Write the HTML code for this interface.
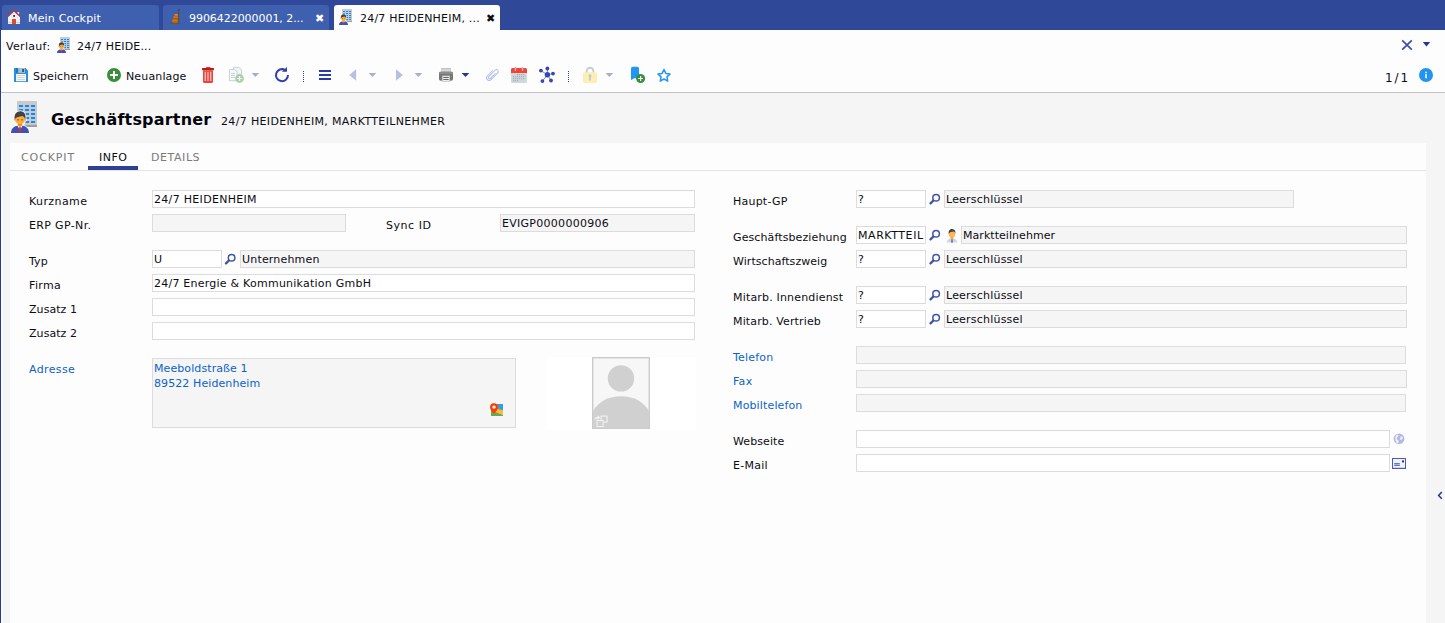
<!DOCTYPE html>
<html lang="de">
<head>
<meta charset="utf-8">
<title>Geschäftspartner</title>
<style>
*{box-sizing:border-box;margin:0;padding:0}
html,body{width:1445px;height:623px;overflow:hidden}
body{position:relative;background:#f5f5f5;font-family:"DejaVu Sans","Liberation Sans",sans-serif;font-size:11px;color:#0c0c14;line-height:18px}
.abs{position:absolute}
svg{position:absolute;overflow:visible}
#lb{left:0;top:30px;width:2px;height:593px;background:#fff;border-left:1px solid #223a94}
#top{left:0;top:0;width:1445px;height:30px;background:#2f4898}
.tab{position:absolute;top:5px;height:25px;border-radius:3px 3px 0 0;background:#3f5faf;color:#fff;line-height:25px;white-space:nowrap}
.tab span{position:absolute;top:1px}
.tab.act{background:#fdfdfd;color:#0c0c14}
#hist{left:1px;top:30px;width:1444px;height:30px;background:#fdfdfd;border-left:1px solid #fff}
#tb{left:1px;top:60px;width:1444px;height:32px;background:#fdfdfd;border-left:1px solid #fff;border-bottom:1px solid #fff}
.t{position:absolute;white-space:nowrap;line-height:18px;height:18px;margin-top:1px}
#panel{left:10px;top:143px;width:1416px;height:480px;background:#fdfdfd}
#strip{left:10px;top:170px;width:1416px;height:1px;background:#e4e4e4}
.ptab{color:#7a7a7a}
.in{position:absolute;height:18px;border:1px solid #dcdcdc;background:#fff;line-height:16px;padding:1px 0 0 1px;white-space:nowrap;overflow:hidden}
.ro{background:#f5f5f5}
.lnk{color:#0b63c9}
</style>
</head>
<body>
<div id="top" class="abs"></div>
<div class="tab" style="left:2px;width:157px"><span style="left:26px;letter-spacing:.17px">Mein Cockpit</span></div>
<div class="tab" style="left:163px;width:166px"><span style="left:26px;letter-spacing:-.05px">9906422000001, 2...</span><span style="left:152px">✖</span></div>
<div class="tab act" style="left:334px;width:166px"><span style="left:26px;letter-spacing:.21px">24/7 HEIDENHEIM, ...</span><span style="left:152px">✖</span></div>
<div id="hist" class="abs"></div><div id="tb" class="abs"></div><div id="lb" class="abs"></div><div class="abs" style="left:1px;top:92px;width:1444px;height:1px;background:#c2c2c2"></div>
<svg style="left:7px;top:9px" width="14" height="16" viewBox="0 0 14 16">
<rect x="10.3" y="3" width="1.8" height="3" fill="#e8eaf6"/>
<path d="M1 7.6 7 1.9 13 7.6V15H1Z" fill="#eceff8"/>
<rect x="1" y="13.2" width="12" height=".9" fill="#c5cae9"/>
<path d="M.5 7.8 7 1.7 13.5 7.8" fill="none" stroke="#c0392b" stroke-width="1.35" stroke-linejoin="miter"/>
<rect x="5" y="10" width="4" height="5" fill="#e64a19"/>
<rect x="6.1" y="6" width="1.9" height="1.9" fill="#01579b"/>
</svg>
<svg style="left:168px;top:8px" width="14" height="17" viewBox="0 0 14 17">
<path d="M10.6 1.6V15.2" stroke="#4e4a44" stroke-width="1"/>
<path d="M1.6 15.3H12.6" stroke="#5a564e" stroke-width="1"/>
<rect x="10.2" y="1.1" width="1.8" height="1.5" fill="#6d3b3b"/>
<rect x="4" y="10.9" width="6.3" height="4.6" rx="1.8" fill="#9a4f10"/>
<rect x="4.3" y="10.9" width="5.8" height="3.5" rx="1.6" fill="#d67a1c"/>
<rect x="5.1" y="8" width="5.2" height="3.4" rx="1.4" fill="#94490e"/>
<rect x="5.3" y="8" width="4.8" height="2.5" rx="1.2" fill="#da801f"/>
<rect x="6.2" y="5.9" width="4.1" height="2.6" rx="1.1" fill="#9a4f10"/>
<rect x="6.4" y="5.9" width="3.7" height="1.8" rx=".9" fill="#e08824"/>
<path d="M5.2 13.2c1.4.7 2.8.4 4.4-.6M6 10c1 .5 2.300.3 3.600-.400" stroke="#8a4a12" stroke-width=".5" fill="none"/>
</svg>
<svg style="left:338px;top:9px" width="14" height="16" viewBox="-1 0 28 32">
<rect x="7" y="0" width="20" height="26" rx="1" fill="#c9c9c9"/><rect x="7" y="24" width="20" height="2" fill="#9e9e9e"/>
<g fill="#0f8af9"><rect x="9" y="4" width="4" height="2"/><rect x="15" y="4" width="4" height="2"/><rect x="21" y="4" width="4" height="2"/><rect x="9" y="8" width="4" height="2"/><rect x="15" y="8" width="4" height="2"/><rect x="21" y="8" width="4" height="2"/><rect x="15" y="12" width="4" height="2"/><rect x="21" y="12" width="4" height="2"/><rect x="15" y="16" width="4" height="2"/><rect x="21" y="16" width="4" height="2"/><rect x="15" y="20" width="4" height="2"/><rect x="21" y="20" width="4" height="2"/></g>
<path d="M4.3 18C3.8 12.5 7 9.6 10.6 9.8 14.6 10 16.4 13.5 15.8 18 16.6 18 16.6 20 15.4 20.2 15 22 13.6 23.6 12.3 24.2 16.5 24.8 19 27.5 19 32H1C1 27.5 3.5 24.8 7.7 24.2 6.4 23.6 5 22 4.6 20.2 3.4 20 3.4 18 4.3 18Z" fill="#fff" stroke="#fff" stroke-width="1.3" stroke-linejoin="round" opacity=".8"/>
<path d="M1 32C1 27 4.5 24.6 10 24.5 15.5 24.6 19 27 19 32Z" fill="#3f51b5"/>
<path d="M7.4 24.6 10 29.2 12.6 24.6Z" fill="#fff"/>
<path d="M9.3 25.6h1.4l.6 4.6L10 31.6 8.7 30.2Z" fill="#d32f2f"/>
<rect x="7.8" y="20.6" width="4.4" height="4.4" rx="1.5" fill="#fb8c00"/>
<ellipse cx="10" cy="18.3" rx="5" ry="5" fill="#ffab40"/>
<circle cx="4.9" cy="18.8" r="1" fill="#ffab40"/><circle cx="15.1" cy="18.8" r="1" fill="#ffab40"/>
<path d="M4.7 18.6C3.8 13 6.8 10.2 10.6 10.3 14.6 10.5 16.2 13.8 15.3 18.6 14.8 16.6 13.8 15.4 12.2 14.9 9.6 16 6.6 15.2 4.7 18.6Z" fill="#424242"/>
<rect x="7.4" y="18" width="1.3" height="1.5" fill="#8d5a2b"/><rect x="11.4" y="18" width="1.3" height="1.5" fill="#8d5a2b"/>
</svg>
<svg style="left:56px;top:37px" width="14" height="16" viewBox="-1 0 28 32">
<rect x="7" y="0" width="20" height="26" rx="1" fill="#c9c9c9"/><rect x="7" y="24" width="20" height="2" fill="#9e9e9e"/>
<g fill="#0f8af9"><rect x="9" y="4" width="4" height="2"/><rect x="15" y="4" width="4" height="2"/><rect x="21" y="4" width="4" height="2"/><rect x="9" y="8" width="4" height="2"/><rect x="15" y="8" width="4" height="2"/><rect x="21" y="8" width="4" height="2"/><rect x="15" y="12" width="4" height="2"/><rect x="21" y="12" width="4" height="2"/><rect x="15" y="16" width="4" height="2"/><rect x="21" y="16" width="4" height="2"/><rect x="15" y="20" width="4" height="2"/><rect x="21" y="20" width="4" height="2"/></g>
<path d="M4.3 18C3.8 12.5 7 9.6 10.6 9.8 14.6 10 16.4 13.5 15.8 18 16.6 18 16.6 20 15.4 20.2 15 22 13.6 23.6 12.3 24.2 16.5 24.8 19 27.5 19 32H1C1 27.5 3.5 24.8 7.7 24.2 6.4 23.6 5 22 4.6 20.2 3.4 20 3.4 18 4.3 18Z" fill="#fff" stroke="#fff" stroke-width="1.3" stroke-linejoin="round" opacity=".8"/>
<path d="M1 32C1 27 4.5 24.6 10 24.5 15.5 24.6 19 27 19 32Z" fill="#3f51b5"/>
<path d="M7.4 24.6 10 29.2 12.6 24.6Z" fill="#fff"/>
<path d="M9.3 25.6h1.4l.6 4.6L10 31.6 8.7 30.2Z" fill="#d32f2f"/>
<rect x="7.8" y="20.6" width="4.4" height="4.4" rx="1.5" fill="#fb8c00"/>
<ellipse cx="10" cy="18.3" rx="5" ry="5" fill="#ffab40"/>
<circle cx="4.9" cy="18.8" r="1" fill="#ffab40"/><circle cx="15.1" cy="18.8" r="1" fill="#ffab40"/>
<path d="M4.7 18.6C3.8 13 6.8 10.2 10.6 10.3 14.6 10.5 16.2 13.8 15.3 18.6 14.8 16.6 13.8 15.4 12.2 14.9 9.6 16 6.6 15.2 4.7 18.6Z" fill="#424242"/>
<rect x="7.4" y="18" width="1.3" height="1.5" fill="#8d5a2b"/><rect x="11.4" y="18" width="1.3" height="1.5" fill="#8d5a2b"/>
</svg>
<svg style="left:10px;top:101px" width="28" height="32" viewBox="0 0 28 32">
<rect x="7" y="0" width="20" height="26" rx="1" fill="#c9c9c9"/><rect x="7" y="24" width="20" height="2" fill="#9e9e9e"/>
<g fill="#0f8af9"><rect x="9" y="4" width="4" height="2"/><rect x="15" y="4" width="4" height="2"/><rect x="21" y="4" width="4" height="2"/><rect x="9" y="8" width="4" height="2"/><rect x="15" y="8" width="4" height="2"/><rect x="21" y="8" width="4" height="2"/><rect x="15" y="12" width="4" height="2"/><rect x="21" y="12" width="4" height="2"/><rect x="15" y="16" width="4" height="2"/><rect x="21" y="16" width="4" height="2"/><rect x="15" y="20" width="4" height="2"/><rect x="21" y="20" width="4" height="2"/></g>
<path d="M4.3 18C3.8 12.5 7 9.6 10.6 9.8 14.6 10 16.4 13.5 15.8 18 16.6 18 16.6 20 15.4 20.2 15 22 13.6 23.6 12.3 24.2 16.5 24.8 19 27.5 19 32H1C1 27.5 3.5 24.8 7.7 24.2 6.4 23.6 5 22 4.6 20.2 3.4 20 3.4 18 4.3 18Z" fill="#fff" stroke="#fff" stroke-width="1.3" stroke-linejoin="round" opacity=".8"/>
<path d="M1 32C1 27 4.5 24.6 10 24.5 15.5 24.6 19 27 19 32Z" fill="#3f51b5"/>
<path d="M7.4 24.6 10 29.2 12.6 24.6Z" fill="#fff"/>
<path d="M9.3 25.6h1.4l.6 4.6L10 31.6 8.7 30.2Z" fill="#d32f2f"/>
<rect x="7.8" y="20.6" width="4.4" height="4.4" rx="1.5" fill="#fb8c00"/>
<ellipse cx="10" cy="18.3" rx="5" ry="5" fill="#ffab40"/>
<circle cx="4.9" cy="18.8" r="1" fill="#ffab40"/><circle cx="15.1" cy="18.8" r="1" fill="#ffab40"/>
<path d="M4.7 18.6C3.8 13 6.8 10.2 10.6 10.3 14.6 10.5 16.2 13.8 15.3 18.6 14.8 16.6 13.8 15.4 12.2 14.9 9.6 16 6.6 15.2 4.7 18.6Z" fill="#424242"/>
<rect x="7.4" y="18" width="1.3" height="1.5" fill="#8d5a2b"/><rect x="11.4" y="18" width="1.3" height="1.5" fill="#8d5a2b"/>
</svg>
<div class="t" style="left:6px;top:37px;letter-spacing:0.31px">Verlauf:</div>
<div class="t" style="left:77px;top:37px;letter-spacing:0.13px">24/7 HEIDE...</div>
<svg style="left:1401px;top:39px" width="12" height="12" viewBox="0 0 12 12"><path d="M1.2 1.4 10.8 10.6M10.8 1.4 1.2 10.6" stroke="#3f4bb0" stroke-width="1.7"/></svg>
<svg style="left:1422px;top:41px" width="9" height="6" viewBox="0 0 9 6"><path d="M.8 1h7.4L4.5 5.4Z" fill="#283593"/></svg>
<svg style="left:14px;top:68px" width="14" height="14" viewBox="0 0 14 14">
<path d="M0 0H11.6L14 2.4V14H0Z" fill="#2b8fdc"/>
<rect x="2" y="0" width="2.2" height="4.6" fill="#1f78bd"/>
<rect x="4.2" y="0" width="6.8" height="4.9" fill="#b0bec5"/>
<rect x="8.2" y="1" width="1.9" height="3" fill="#1c5a8c"/>
<rect x="2.1" y="6" width="9.9" height="7.2" fill="#fff"/>
<path d="M3.3 7.7h7.6M3.3 9.7h7.6M3.3 11.7h7.6" stroke="#b0bec5" stroke-width=".8"/>
</svg>
<div class="t" style="left:33px;top:67px;letter-spacing:0.08px">Speichern</div>
<svg style="left:107px;top:68px" width="14" height="14" viewBox="0 0 14 14"><circle cx="7" cy="7" r="7" fill="#388e3c"/><path d="M3 7h8M7 3v8" stroke="#fff" stroke-width="2"/></svg>
<div class="t" style="left:126px;top:67px;letter-spacing:0.14px">Neuanlage</div>
<svg style="left:201px;top:66px" width="14" height="18" viewBox="0 0 14 18">
<rect x="5" y="1" width="4.6" height="1.6" rx=".8" fill="#e53935"/>
<rect x="1" y="2" width="12" height="2.2" rx=".6" fill="#b71c1c"/>
<path d="M2 4.2H12V15.4Q12 17 10.4 17H3.6Q2 17 2 15.4Z" fill="#e8453c"/>
<path d="M4.3 5.8V15M7 5.8V15M9.7 5.8V15" stroke="#ffb7b2" stroke-width="1.4"/>
</svg>
<svg style="left:228px;top:66px" width="17" height="18" viewBox="0 0 17 18">
<path d="M5.6 1.3H11L13.6 3.9V12H5.6Z" fill="#f1f3f5" stroke="#c3cdd3" stroke-width=".9"/>
<path d="M1.4 3.6H6.8L9.2 6V14.7H1.4Z" fill="#f7f8f9" stroke="#c3cdd3" stroke-width=".9"/>
<path d="M3 7.5h4M3 9.5h4M3 11.5h4" stroke="#c9d2d8" stroke-width="1"/>
<circle cx="11.5" cy="12.5" r="4.4" fill="#a9d1ab"/>
<path d="M9.2 12.5h4.6M11.5 10.2v4.6" stroke="#fff" stroke-width="1.2"/>
</svg>
<svg style="left:251px;top:72px" width="9" height="6" viewBox="0 0 9 6"><path transform="translate(0.4 0)" d="M.2 .9h7.6L4 5.1Z" fill="#a7aed6"/></svg>
<svg style="left:274px;top:66px" width="16" height="17" viewBox="0 0 16 17">
<path d="M14 9.1A6 6 0 1 1 10.9 3.9" fill="none" stroke="#2f3eac" stroke-width="2"/>
<path d="M13 .9V5.8H7.9Z" fill="#2f3eac"/>
</svg>
<div class="abs" style="left:303px;top:71px;width:1px;height:11px;border-left:1px dotted #2f3eac"></div>
<svg style="left:319px;top:70px" width="12" height="10" viewBox="0 0 12 10"><path d="M0 1h12M0 5h12M0 9h12" stroke="#2a3aa6" stroke-width="2"/></svg>
<svg style="left:349px;top:69px" width="8" height="12" viewBox="0 0 8 12"><path d="M.2 6 7.1 .2V11.8Z" fill="#b9bee5"/></svg>
<svg style="left:368px;top:72px" width="9" height="6" viewBox="0 0 9 6"><path transform="translate(0.4 0)" d="M.2 .9h7.6L4 5.1Z" fill="#a7aed6"/></svg>
<svg style="left:396px;top:69px" width="8" height="12" viewBox="0 0 8 12"><path d="M6.9 6 0 .2V11.8Z" fill="#b9bee5"/></svg>
<svg style="left:414px;top:72px" width="9" height="6" viewBox="0 0 9 6"><path transform="translate(0.4 0)" d="M.2 .9h7.6L4 5.1Z" fill="#a7aed6"/></svg>
<svg style="left:439px;top:68px" width="14" height="14" viewBox="0 0 14 14">
<rect x="2" y="0" width="10" height="4" fill="#d6d6d6"/><rect x="2" y="0" width="10" height="1" fill="#c2c2c2"/>
<rect x="0" y="3.7" width="14" height="9" rx="1.8" fill="#787878"/>
<rect x="0" y="3.7" width="14" height="2.3" rx="1.2" fill="#8c8c8c"/>
<rect x="3" y="7.6" width="8" height="6.2" fill="#bdbdbd"/>
<rect x="3.7" y="8.2" width="6.6" height="5" fill="#ececec"/>
<path d="M4.3 9.5h5.4M4.3 11.5h5.4" stroke="#666" stroke-width="1"/>
<rect x="12" y="4.2" width="1.2" height="1.2" fill="#2ecc71"/>
</svg>
<svg style="left:461px;top:72px" width="9" height="6" viewBox="0 0 9 6"><path transform="translate(0.5 0)" d="M.2 .9h7.6L4 5.1Z" fill="#233592"/></svg>
<svg style="left:485px;top:68px" width="14" height="14" viewBox="0 0 14 14">
<g transform="translate(7.1 6.9) rotate(45) translate(-2.6 -7.6)"><path d="M0 4V11.8A2.6 2.6 0 0 0 5.2 11.8V2.2A1.9 1.9 0 0 0 1.4 2.2V11.2A1.2 1.2 0 0 0 3.8 11.2V4.4" fill="none" stroke="#b2baea" stroke-width=".95" stroke-linecap="round"/></g>
</svg>
<svg style="left:511px;top:66px" width="16" height="18" viewBox="0 0 16 18"><rect x="0" y="2" width="16" height="15" rx="1.5" fill="#cfd8dc"/><path d="M0 7V3.5Q0 2 1.5 2H14.5Q16 2 16 3.5V7Z" fill="#f44336"/><rect x="3.7" y=".7" width="1.5" height="4.2" rx=".7" fill="#b0bec5"/><rect x="10.8" y=".7" width="1.5" height="4.2" rx=".7" fill="#b0bec5"/><g fill="#90a4ae"><rect x="6.14" y="8.2" width="1" height="1"/><rect x="8.16" y="8.2" width="1" height="1"/><rect x="10.18" y="8.2" width="1" height="1"/><rect x="12.20" y="8.2" width="1" height="1"/><rect x="2.10" y="10.2" width="1" height="1"/><rect x="4.12" y="10.2" width="1" height="1"/><rect x="6.14" y="10.2" width="1" height="1"/><rect x="8.16" y="10.2" width="1" height="1"/><rect x="10.18" y="10.2" width="1" height="1"/><rect x="12.20" y="10.2" width="1" height="1"/><rect x="2.10" y="12.2" width="1" height="1"/><rect x="4.12" y="12.2" width="1" height="1"/><rect x="6.14" y="12.2" width="1" height="1"/><rect x="8.16" y="12.2" width="1" height="1"/><rect x="10.18" y="12.2" width="1" height="1"/><rect x="12.20" y="12.2" width="1" height="1"/><rect x="2.10" y="14.2" width="1" height="1"/><rect x="4.12" y="14.2" width="1" height="1"/><rect x="6.14" y="14.2" width="1" height="1"/></g></svg>
<svg style="left:538px;top:66px" width="18" height="18" viewBox="538 66 18 18"><path d="M547.4 74.8L540.9 70.6" stroke="#78909c" stroke-width="1"/><path d="M547.4 74.8L547.4 68.5" stroke="#78909c" stroke-width="1"/><path d="M547.4 74.8L553 73.6" stroke="#78909c" stroke-width="1"/><path d="M547.4 74.8L551 80.5" stroke="#78909c" stroke-width="1"/><path d="M547.4 74.8L542.4 81.1" stroke="#78909c" stroke-width="1"/><circle cx="540.9" cy="70.6" r="1.9" fill="#3646b6"/><circle cx="547.4" cy="68.5" r="1.9" fill="#3646b6"/><circle cx="553" cy="73.6" r="1.9" fill="#3646b6"/><circle cx="551" cy="80.5" r="1.9" fill="#3646b6"/><circle cx="542.4" cy="81.1" r="1.9" fill="#3646b6"/><circle cx="547.4" cy="74.8" r="2.7" fill="#3646b6"/></svg>
<div class="abs" style="left:568px;top:71px;width:1px;height:11px;border-left:1px dotted #2f3eac"></div>
<svg style="left:583px;top:66px" width="14" height="18" viewBox="0 0 14 18">
<path d="M3.6 7V5.2a3.4 3.4 0 0 1 6.8 0V7" fill="none" stroke="#c3ced5" stroke-width="1.9"/>
<rect x="0" y="6.3" width="14" height="10.6" rx="1.6" fill="#fcefb4"/>
<circle cx="7" cy="9.8" r="1.4" fill="#b8c5ce"/><rect x="6.2" y="9.8" width="1.6" height="4.8" rx=".5" fill="#b8c5ce"/>
</svg>
<svg style="left:605px;top:72px" width="9" height="6" viewBox="0 0 9 6"><path transform="translate(0.4 0)" d="M.2 .9h7.6L4 5.1Z" fill="#a7aed6"/></svg>
<svg style="left:631px;top:66px" width="15" height="18" viewBox="0 0 15 18">
<path d="M0 2.6Q0 .8 1.8 .8H6.2Q8 .8 8 2.6V14L4 12 0 14Z" fill="#2196f3"/>
<circle cx="9.6" cy="12.5" r="4.5" fill="#388e3c"/>
<path d="M7.2 12.5h4.8M9.6 10.1v4.8" stroke="#fff" stroke-width="1.2"/>
</svg>
<svg style="left:656px;top:67px" width="16" height="16" viewBox="656 67 16 16"><polygon points="664.00,69.50 665.82,73.39 670.09,73.92 666.95,76.86 667.76,81.08 664.00,79.00 660.24,81.08 661.05,76.86 657.91,73.92 662.18,73.39" fill="none" stroke="#2196f3" stroke-width="1.5" stroke-linejoin="round"/></svg>
<div class="t" style="left:1385px;top:68px;letter-spacing:1.9px;font-size:12px">1/1</div>
<svg style="left:1419px;top:68px" width="14" height="14" viewBox="0 0 14 14"><circle cx="7" cy="7" r="7" fill="#2393f0"/><rect x="6.25" y="6.1" width="1.5" height="4.2" fill="#fff"/><rect x="6.25" y="3.7" width="1.5" height="1.5" fill="#fff"/></svg>
<div class="t" style="left:51px;top:108px;font-size:16px;font-weight:bold;line-height:22px;height:22px;letter-spacing:.2px;color:#05050f">Geschäftspartner</div>
<div class="t" style="left:221px;top:112px;letter-spacing:0.34px">24/7 HEIDENHEIM, MARKTTEILNEHMER</div>
<div id="panel" class="abs"></div><div id="strip" class="abs"></div>
<div class="t ptab" style="left:21px;top:148px;letter-spacing:0.9px">COCKPIT</div>
<div class="t" style="left:99px;top:148px;letter-spacing:0.5px">INFO</div>
<div class="t ptab" style="left:151px;top:148px;letter-spacing:0.57px">DETAILS</div>
<div class="abs" style="left:88px;top:166px;width:50px;height:4px;background:#2e4090"></div>
<div class="abs" style="left:1426px;top:143px;width:19px;height:480px;background:#f5f5f5"></div>
<svg style="left:1437px;top:491px" width="6" height="9" viewBox="0 0 6 9"><path d="M4.8 1 1.6 4.4 4.8 7.8" fill="none" stroke="#283593" stroke-width="1.5"/></svg>
<div class="t" style="left:29px;top:192px;letter-spacing:0.4px">Kurzname</div>
<div class="in" style="left:152px;top:190px;width:543px;letter-spacing:0.31px">24/7 HEIDENHEIM</div>
<div class="t" style="left:29px;top:216px;letter-spacing:0.35px">ERP GP-Nr.</div>
<div class="in ro" style="left:152px;top:214px;width:194px"></div>
<div class="t" style="left:386px;top:216px;letter-spacing:0.53px">Sync ID</div>
<div class="in ro" style="left:500px;top:214px;width:195px;letter-spacing:0.28px">EVIGP0000000906</div>
<div class="t" style="left:29px;top:252px;letter-spacing:0.1px">Typ</div>
<div class="in" style="left:152px;top:250px;width:70px">U</div>
<svg class="mag" style="left:224px;top:253px" width="13" height="13" viewBox="0 0 13 13"><g transform="translate(0 0.4)"><circle cx="7.6" cy="4.4" r="3.3" fill="none" stroke="#3f54a6" stroke-width="1.5"/><path d="M5.3 6.7 4 8" stroke="#3f54a6" stroke-width="1.5"/><path d="M4.4 7.6 2 10" stroke="#3f54a6" stroke-width="2.3" stroke-linecap="round"/></g></svg>
<div class="in ro" style="left:240px;top:250px;width:455px;letter-spacing:0.18px">Unternehmen</div>
<div class="t" style="left:29px;top:276px;letter-spacing:0.35px">Firma</div>
<div class="in" style="left:152px;top:274px;width:543px;letter-spacing:0.235px">24/7 Energie &amp; Kommunikation GmbH</div>
<div class="t" style="left:29px;top:300px;letter-spacing:0.06px">Zusatz 1</div>
<div class="in" style="left:152px;top:298px;width:543px"></div>
<div class="t" style="left:29px;top:324px;letter-spacing:0.06px">Zusatz 2</div>
<div class="in" style="left:152px;top:322px;width:543px"></div>
<div class="t lnk" style="left:29px;top:360px;letter-spacing:0.36px">Adresse</div>
<div class="in ro lnk" style="left:152px;top:358px;width:364px;height:70px;line-height:15px;padding-top:2px;white-space:normal;letter-spacing:.09px">Meeboldstraße 1<br>89522 Heidenheim</div>
<svg style="left:489px;top:402px" width="15" height="15" viewBox="0 0 15 15">
<rect x="2" y="2" width="12" height="12" fill="#6aa84f"/>
<path d="M5 2H14V8.4Z" fill="#2f9df4"/>
<path d="M5.5 6.200 14 8.200V13.300L4.500 9.200Z" fill="#ffb74d"/>
<path d="M5 12C3 9 1 7.6 1 5.2a4 4 0 0 1 8 0C9 7.6 7 9 5 12Z" fill="#ff3d00"/>
<circle cx="5" cy="5.1" r="1.7" fill="#fff"/>
</svg>
<div class="abs" style="left:546px;top:357px;width:150px;height:72px;background:#fff"></div>
<svg style="left:592px;top:357px" width="58" height="72" viewBox="0 0 58 72">
<rect x=".7" y=".7" width="56.6" height="70.6" fill="#f7f7f7" stroke="#cbcbcb" stroke-width="1.4"/>
<circle cx="29" cy="21.4" r="13.2" fill="#d0d0d0"/>
<path d="M1 54C7 44 17 39.3 29 39.3S51 44 57 54V71H1Z" fill="#d0d0d0"/>
<g transform="translate(1.6 -.4)"><rect x="7.5" y="59.5" width="6" height="6" fill="#d0d0d0" stroke="#f4f4f4" stroke-width="1"/>
<rect x="3.5" y="64" width="6" height="6" fill="#d0d0d0" stroke="#f4f4f4" stroke-width="1"/>
<path d="M.6 63.6C.8 61.2 2.2 60.2 4 60.2V58.6L6.6 61 4 63.4V61.9C2.6 61.9 1.6 62.4 .6 63.6Z" fill="#f4f4f4"/></g>
</svg>
<div class="t" style="left:733px;top:192px;letter-spacing:0.22px">Haupt-GP</div>
<div class="in" style="left:856px;top:190px;width:70px">?</div>
<svg class="mag" style="left:928px;top:193px" width="13" height="13" viewBox="0 0 13 13"><g transform="translate(0.5 0.4)"><circle cx="7.6" cy="4.4" r="3.3" fill="none" stroke="#3f54a6" stroke-width="1.5"/><path d="M5.3 6.7 4 8" stroke="#3f54a6" stroke-width="1.5"/><path d="M4.4 7.6 2 10" stroke="#3f54a6" stroke-width="2.3" stroke-linecap="round"/></g></svg>
<div class="in ro" style="left:944px;top:190px;width:350px;letter-spacing:0.21px">Leerschlüssel</div>
<div class="t" style="left:733px;top:228px;letter-spacing:0.11px">Geschäftsbeziehung</div>
<div class="in" style="left:856px;top:226px;width:70px;letter-spacing:0.56px">MARKTTEIL</div>
<svg class="mag" style="left:928px;top:229px" width="13" height="13" viewBox="0 0 13 13"><g transform="translate(0.5 0.4)"><circle cx="7.6" cy="4.4" r="3.3" fill="none" stroke="#3f54a6" stroke-width="1.5"/><path d="M5.3 6.7 4 8" stroke="#3f54a6" stroke-width="1.5"/><path d="M4.4 7.6 2 10" stroke="#3f54a6" stroke-width="2.3" stroke-linecap="round"/></g></svg>
<div class="in ro" style="left:961px;top:226px;width:446px;letter-spacing:0.05px">Marktteilnehmer</div>
<svg style="left:946px;top:228px" width="12" height="15" viewBox="0 0 12 15">
<path d="M.8 14.6C.8 11.8 2.6 10.3 6 10.2 9.4 10.3 11.2 11.8 11.2 14.6Z" fill="#cfd8dc"/>
<path d="M4.6 10.3 6 12.4 7.4 10.3Z" fill="#eceff1"/>
<path d="M5.4 10.9h1.2l.4 3.7H5Z" fill="#5c6bc0"/>
<rect x="4.7" y="8.4" width="2.6" height="2.3" fill="#ff9800"/>
<ellipse cx="6" cy="6.2" rx="3.1" ry="3.5" fill="#ffb74d"/>
<path d="M2.7 6C2.2 2.6 4 1 6.2 1.1 8.6 1.2 9.8 3 9.3 6 9 4.6 8.4 3.8 7.4 3.6 5.6 4.2 3.6 3.8 2.7 6Z" fill="#424242"/>
</svg>
<div class="t" style="left:733px;top:252px;letter-spacing:0.06px">Wirtschaftszweig</div>
<div class="in" style="left:856px;top:250px;width:70px">?</div>
<svg class="mag" style="left:928px;top:253px" width="13" height="13" viewBox="0 0 13 13"><g transform="translate(0.5 0.4)"><circle cx="7.6" cy="4.4" r="3.3" fill="none" stroke="#3f54a6" stroke-width="1.5"/><path d="M5.3 6.7 4 8" stroke="#3f54a6" stroke-width="1.5"/><path d="M4.4 7.6 2 10" stroke="#3f54a6" stroke-width="2.3" stroke-linecap="round"/></g></svg>
<div class="in ro" style="left:944px;top:250px;width:463px;letter-spacing:0.21px">Leerschlüssel</div>
<div class="t" style="left:733px;top:288px;letter-spacing:0.18px">Mitarb. Innendienst</div>
<div class="in" style="left:856px;top:286px;width:70px">?</div>
<svg class="mag" style="left:928px;top:289px" width="13" height="13" viewBox="0 0 13 13"><g transform="translate(0.5 0.4)"><circle cx="7.6" cy="4.4" r="3.3" fill="none" stroke="#3f54a6" stroke-width="1.5"/><path d="M5.3 6.7 4 8" stroke="#3f54a6" stroke-width="1.5"/><path d="M4.4 7.6 2 10" stroke="#3f54a6" stroke-width="2.3" stroke-linecap="round"/></g></svg>
<div class="in ro" style="left:944px;top:286px;width:463px;letter-spacing:0.21px">Leerschlüssel</div>
<div class="t" style="left:733px;top:312px;letter-spacing:0.14px">Mitarb. Vertrieb</div>
<div class="in" style="left:856px;top:310px;width:70px">?</div>
<svg class="mag" style="left:928px;top:313px" width="13" height="13" viewBox="0 0 13 13"><g transform="translate(0.5 0.4)"><circle cx="7.6" cy="4.4" r="3.3" fill="none" stroke="#3f54a6" stroke-width="1.5"/><path d="M5.3 6.7 4 8" stroke="#3f54a6" stroke-width="1.5"/><path d="M4.4 7.6 2 10" stroke="#3f54a6" stroke-width="2.3" stroke-linecap="round"/></g></svg>
<div class="in ro" style="left:944px;top:310px;width:463px;letter-spacing:0.21px">Leerschlüssel</div>
<div class="t lnk" style="left:733px;top:348px;letter-spacing:0.2px">Telefon</div>
<div class="in ro" style="left:856px;top:346px;width:550px"></div>
<div class="t lnk" style="left:733px;top:372px;letter-spacing:0.3px">Fax</div>
<div class="in ro" style="left:856px;top:370px;width:551px"></div>
<div class="t lnk" style="left:733px;top:396px;letter-spacing:0.14px">Mobiltelefon</div>
<div class="in ro" style="left:856px;top:394px;width:550px"></div>
<div class="t" style="left:733px;top:432px;letter-spacing:0.08px">Webseite</div>
<div class="in" style="left:856px;top:430px;width:534px"></div>
<div class="t" style="left:733px;top:456px;letter-spacing:0.25px">E-Mail</div>
<div class="in" style="left:856px;top:454px;width:534px"></div>
<svg style="left:1393px;top:433px" width="12" height="12" viewBox="0 0 12 12">
<circle cx="6" cy="5.8" r="5.4" fill="#b3bae1"/>
<path d="M4.600 1.400C5.800 1.800 5.600 3 4.800 3.600 4 4.200 3.400 5 3.800 6 4.200 7 5.400 7 5.600 8.200 5.700 9.200 5.200 10 4.600 10.600 3.600 9.800 3 8.600 2.600 7.400 2.200 6.200 2 4.600 2.600 3.400 3 2.400 3.800 1.600 4.600 1.400ZM8.200 3.200C9.200 3.400 10 4.400 10 5.600 9.400 5.400 8.800 5.800 8.600 6.600 8.400 7.400 7.800 7.400 7.400 6.800 7 6 7.200 4.800 7.600 4 7.800 3.600 8 3.400 8.200 3.200Z" fill="#f6f7fc" opacity=".9"/>
</svg>
<svg style="left:1392px;top:458px" width="14" height="11" viewBox="0 0 14 11">
<rect x=".5" y=".5" width="13" height="10" fill="#f1f2fa" stroke="#4a5cb8"/>
<rect x="0" y="9.8" width="14" height="1.2" fill="#4a5cb8"/>
<rect x="10" y="2.4" width="2" height="2" fill="#283593"/>
<path d="M2.2 5.6h5.6M2.2 7.4h5.6" stroke="#6474c4" stroke-width="1.3"/>
</svg>
</body>
</html>
